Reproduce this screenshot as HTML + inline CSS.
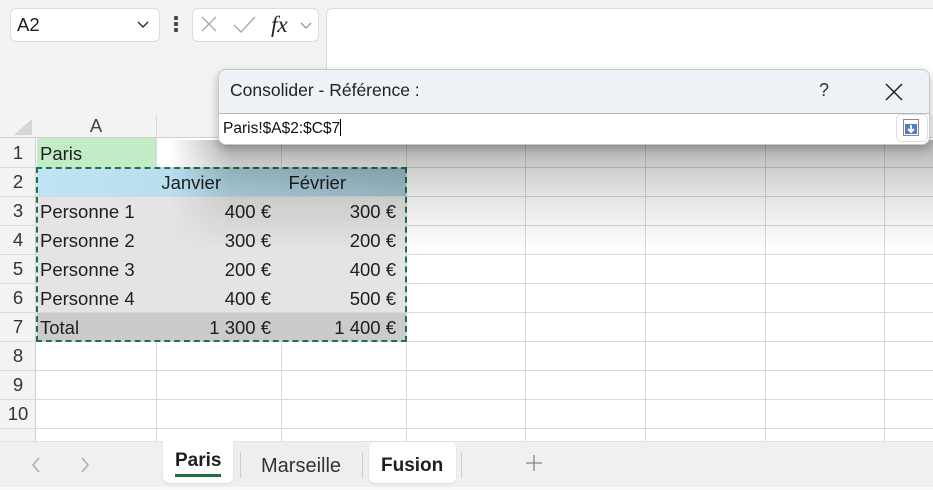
<!DOCTYPE html>
<html><head><meta charset="utf-8"><style>
*{margin:0;padding:0;box-sizing:border-box}
body{width:933px;height:490px;overflow:hidden;background:#f3f3f3;font-family:"Liberation Sans",sans-serif;position:relative;color:#1f1f1f}
.a{position:absolute}
.vl{position:absolute;width:1px;background:#d9d9d9}
.hl{position:absolute;height:1px;background:#d9d9d9}
.rn{position:absolute;left:0;width:36px;text-align:center;font-size:18.5px;color:#333}
.c{position:absolute;font-size:18.5px;line-height:29px;white-space:nowrap}
.r{text-align:right}
</style></head><body>
<div class="a" style="left:10px;top:8px;width:150px;height:34px;background:#fff;border:1px solid #dcdcdc;border-radius:6px"></div>
<div class="a" style="left:17px;top:14px;font-size:18.5px">A2</div>
<svg class="a" style="left:136px;top:19px" width="14" height="10"><path d="M2 3 L7 8 L12 3" fill="none" stroke="#333" stroke-width="1.5"/></svg>
<div class="a" style="left:174px;top:16px;width:4px;height:4px;background:#444;border-radius:1px"></div>
<div class="a" style="left:174px;top:22px;width:4px;height:4px;background:#444;border-radius:1px"></div>
<div class="a" style="left:174px;top:28px;width:4px;height:4px;background:#444;border-radius:1px"></div>
<div class="a" style="left:192px;top:8px;width:127px;height:34px;background:#fff;border:1px solid #dcdcdc;border-radius:6px"></div>
<svg class="a" style="left:198px;top:12px" width="120" height="26"><path d="M4 5 L18 19 M18 5 L4 19" stroke="#aaa" stroke-width="1.4"/><path d="M36 13 L43 20 L57 5" fill="none" stroke="#aaa" stroke-width="1.4"/><text x="73" y="20" font-family="Liberation Serif" font-style="italic" font-size="23" fill="#222">fx</text><path d="M103 11 L108 16 L113 11" fill="none" stroke="#999" stroke-width="1.3"/></svg>
<div class="a" style="left:326px;top:8px;width:620px;height:110px;background:#fff;border:1px solid #dcdcdc;border-radius:6px"></div>
<div class="a" style="left:0;top:115px;width:933px;height:326px;background:#fff"></div>
<div class="a" style="left:0;top:115px;width:933px;height:23px;background:#f3f3f3;border-bottom:1px solid #cfcfcf"></div>
<div class="a" style="left:0;top:138px;width:36px;height:303px;background:#f3f3f3;border-right:1px solid #cfcfcf"></div>
<svg class="a" style="left:10px;top:116px" width="24" height="20"><path d="M22 3 L22 19 L4 19 Z" fill="#d6d6d6"/></svg>
<div class="a" style="left:36px;top:115px;width:120px;text-align:center;font-size:18.5px;color:#444">A</div>
<div class="vl" style="left:156px;top:115px;height:326px"></div>
<div class="vl" style="left:281px;top:138px;height:303px"></div>
<div class="vl" style="left:406px;top:138px;height:303px"></div>
<div class="vl" style="left:525px;top:138px;height:303px"></div>
<div class="vl" style="left:645px;top:138px;height:303px"></div>
<div class="vl" style="left:765px;top:138px;height:303px"></div>
<div class="vl" style="left:884px;top:138px;height:303px"></div>
<div class="hl" style="left:0;top:167px;width:933px"></div>
<div class="hl" style="left:0;top:196px;width:933px"></div>
<div class="hl" style="left:0;top:225px;width:933px"></div>
<div class="hl" style="left:0;top:254px;width:933px"></div>
<div class="hl" style="left:0;top:283px;width:933px"></div>
<div class="hl" style="left:0;top:312px;width:933px"></div>
<div class="hl" style="left:0;top:341px;width:933px"></div>
<div class="hl" style="left:0;top:370px;width:933px"></div>
<div class="hl" style="left:0;top:399px;width:933px"></div>
<div class="hl" style="left:0;top:428px;width:933px"></div>
<div class="a" style="left:37px;top:138px;width:119px;height:29px;background:#c1ecc6"></div>
<div class="a" style="left:37px;top:168px;width:369px;height:28px;background:linear-gradient(90deg,#c0e4f4,#b6dcec 50%,#a4c7d4)"></div>
<div class="a" style="left:37px;top:197px;width:369px;height:115px;background:#e4e4e4"></div>
<div class="a" style="left:37px;top:313px;width:369px;height:28px;background:#cbcbcb"></div>
<div class="a" style="left:36px;top:167px;width:371px;height:175px;border:2px dashed #217346"></div>
<div class="rn" style="top:142px">1</div><div class="rn" style="top:171px">2</div><div class="rn" style="top:200px">3</div><div class="rn" style="top:229px">4</div><div class="rn" style="top:258px">5</div><div class="rn" style="top:287px">6</div><div class="rn" style="top:316px">7</div><div class="rn" style="top:345px">8</div><div class="rn" style="top:374px">9</div><div class="rn" style="top:403px">10</div>
<div class="c" style="left:40px;top:139px">Paris</div>
<div class="c r" style="left:156px;width:65px;top:168px">Janvier</div>
<div class="c r" style="left:281px;width:65px;top:168px">Février</div>
<div class="c" style="left:40px;top:197px">Personne 1</div><div class="c r" style="left:156px;width:115px;top:197px">400 €</div><div class="c r" style="left:281px;width:115px;top:197px">300 €</div>
<div class="c" style="left:40px;top:226px">Personne 2</div><div class="c r" style="left:156px;width:115px;top:226px">300 €</div><div class="c r" style="left:281px;width:115px;top:226px">200 €</div>
<div class="c" style="left:40px;top:255px">Personne 3</div><div class="c r" style="left:156px;width:115px;top:255px">200 €</div><div class="c r" style="left:281px;width:115px;top:255px">400 €</div>
<div class="c" style="left:40px;top:284px">Personne 4</div><div class="c r" style="left:156px;width:115px;top:284px">400 €</div><div class="c r" style="left:281px;width:115px;top:284px">500 €</div>
<div class="c" style="left:40px;top:313px">Total</div><div class="c r" style="left:156px;width:115px;top:313px">1 300 €</div><div class="c r" style="left:281px;width:115px;top:313px">1 400 €</div>
<!-- dialog shadow overlay -->
<div class="a" style="left:170px;top:140px;width:763px;height:110px;background:linear-gradient(180deg,rgba(0,0,0,.3),rgba(0,0,0,.12) 45%,rgba(0,0,0,0));-webkit-mask-image:linear-gradient(90deg,transparent,#000 60px);mask-image:linear-gradient(90deg,transparent,#000 60px)"></div>
<div class="a" style="left:0;top:441px;width:933px;height:46px;background:#f0eff1;border-top:1px solid #e2e2e2"></div>
<div class="a" style="left:0;top:487px;width:933px;height:3px;background:#fafafa"></div>
<svg class="a" style="left:28px;top:454px" width="70" height="22"><path d="M11 4 L5 11 L11 18" fill="none" stroke="#aaa" stroke-width="1.5"/><path d="M54 4 L60 11 L54 18" fill="none" stroke="#aaa" stroke-width="1.5"/></svg>
<div class="a" style="left:163px;top:441px;width:70px;height:42px;background:#fff;border-radius:0 0 6px 6px;box-shadow:0 1px 2px rgba(0,0,0,.1)"></div>
<div class="a" style="left:175px;top:450px;font-size:19px;font-weight:bold">Paris</div>
<div class="a" style="left:175px;top:474px;width:46px;height:3px;background:#1e7145"></div>
<div class="a" style="left:234px;top:442px;width:133px;height:40px;background:#eeedf0;border-radius:6px"></div>
<div class="a" style="left:240px;top:452px;width:1px;height:26px;background:#ccc"></div>
<div class="a" style="left:362px;top:452px;width:1px;height:26px;background:#ccc"></div>
<div class="a" style="left:261px;top:455px;font-size:20px;color:#333">Marseille</div>
<div class="a" style="left:369px;top:442px;width:87px;height:41px;background:#fff;border-radius:6px;box-shadow:0 1px 2px rgba(0,0,0,.1)"></div>
<div class="a" style="left:381px;top:455px;font-size:19px;font-weight:bold">Fusion</div>
<div class="a" style="left:461px;top:452px;width:1px;height:26px;background:#ccc"></div>
<svg class="a" style="left:524px;top:453px" width="20" height="20"><path d="M10 2 V18 M2 10 H18" stroke="#888" stroke-width="1.3"/></svg>
<div class="a" style="left:218px;top:69px;width:712px;height:76px;background:#eef1f5;border:1px solid #c8c8c8;border-radius:8px;box-shadow:0 4px 10px rgba(0,0,0,.25)"></div>
<div class="a" style="left:230px;top:80px;font-size:17.5px;color:#222">Consolider - Référence :</div>
<div class="a" style="left:819px;top:80px;font-size:18px;color:#333">?</div>
<svg class="a" style="left:884px;top:82px" width="20" height="20"><path d="M2 2 L18 18 M18 2 L2 18" stroke="#222" stroke-width="1.5"/></svg>
<div class="a" style="left:219px;top:113px;width:710px;height:31px;background:#fff;border-top:1px solid #b8b8b8;border-radius:0 0 7px 7px"></div>
<div class="a" style="left:223px;top:119px;font-size:15.5px;color:#111">Paris!$A$2:$C$7<span style="display:inline-block;width:1px;height:17px;background:#000;vertical-align:-3px"></span></div>
<div class="a" style="left:896px;top:114px;width:32px;height:28px;background:#fff;border:1px solid #ddd;border-radius:5px"></div>
<svg class="a" style="left:903px;top:119px" width="16" height="17"><rect x="0.5" y="0.5" width="15" height="16" fill="#fff" stroke="#888"/><rect x="2" y="5" width="12" height="10" fill="#4a7fc1"/><path d="M8 6 V13 M5 10 L8 13 L11 10" stroke="#fff" stroke-width="2" fill="none"/></svg>
</body></html>
